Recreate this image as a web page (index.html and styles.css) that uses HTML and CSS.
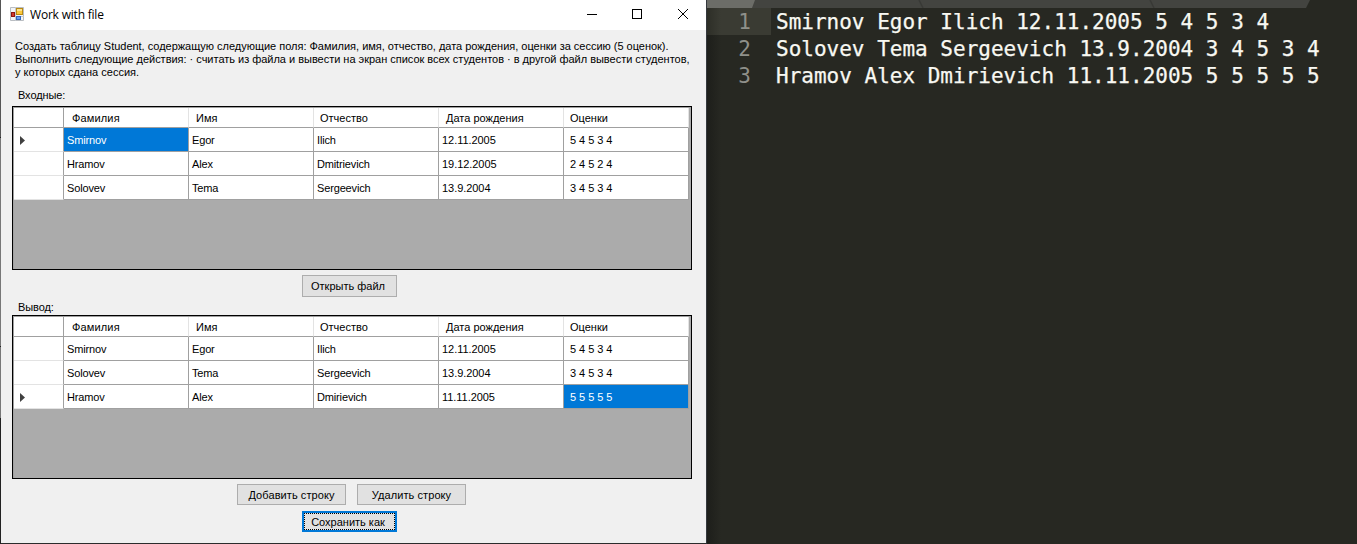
FILE: index.html
```
<!DOCTYPE html>
<html lang="ru">
<head>
<meta charset="utf-8">
<title>Work with file</title>
<link rel="stylesheet" href="styles.css">
</head>
<body>
<main class="desktop">
  <div class="backdrop"></div>
  <section class="window">
    <header class="titlebar">
      <svg class="app-icon" width="14" height="14" viewBox="0 0 14 14">
        <path d="M.5 .5h13v13H.5z" fill="#f3f5f8" stroke="#b9bdc2"/>
        <path d="M5.500 0v14M0 9.500h14" stroke="#c5c9ce"/>
        <rect x="6.500" y="1.500" width="6" height="6" fill="#fbc83c" stroke="#b98a13"/>
        <path d="M7 2h5v2H7z" fill="#fde391"/>
        <rect x="1.500" y="5.500" width="3" height="4" fill="#d0392b" stroke="#8e1711"/>
        <rect x="6.500" y="9.500" width="4" height="3" fill="#6b9ff0" stroke="#3568bd"/>
      </svg>
      <h1 class="title">Work with file</h1>
      <svg class="controls" width="104" height="12" viewBox="0 0 104 12" fill="none" stroke="#000" shape-rendering="crispEdges">
        <path d="M0 6.500h10M45.500 1.500h9v9h-9z"/>
        <path d="M91 1l10 10M101 1L91 11" shape-rendering="auto"/>
      </svg>
    </header>
    <div class="form">
      <p class="task"><span class="fit">Создать таблицу Student, содержащую следующие поля: Фамилия, имя, отчество, дата рождения, оценки за сессию (5 оценок).</span><br><span class="fit">Выполнить следующие действия: · считать из файла и вывести на экран список всех студентов · в другой файл вывести студентов,</span><br><span>у которых сдана сессия.</span></p>
      <h2 class="label label-in">Входные:</h2>
      <div class="grid">
        <div class="row head"><i></i><b class="surname">Фамилия</b><b>Имя</b><b class="patronymic">Отчество</b><b>Дата рождения</b><b class="patronymic">Оценки</b></div>
        <div class="row"><i><svg width="5" height="9" viewBox="0 0 5 9"><path d="M0 0l5 4.500L0 9z" fill="#404040"/></svg></i><span class="selected">Smirnov</span><span>Egor</span><span>Ilich</span><span class="date">12.11.2005</span><span class="marks">5 4 5 3 4</span></div>
        <div class="row"><i></i><span>Hramov</span><span>Alex</span><span>Dmitrievich</span><span class="date">19.12.2005</span><span class="marks">2 4 5 2 4</span></div>
        <div class="row"><i></i><span>Solovev</span><span>Tema</span><span>Sergeevich</span><span class="date">13.9.2004</span><span class="marks">3 4 5 3 4</span></div>
      </div>
      <div class="actions open"><button class="btn narrow">Открыть файл</button></div>
      <h2 class="label label-out">Вывод:</h2>
      <div class="grid">
        <div class="row head"><i></i><b class="surname">Фамилия</b><b>Имя</b><b class="patronymic">Отчество</b><b>Дата рождения</b><b class="patronymic">Оценки</b></div>
        <div class="row"><i></i><span>Smirnov</span><span>Egor</span><span>Ilich</span><span class="date">12.11.2005</span><span class="marks">5 4 5 3 4</span></div>
        <div class="row"><i></i><span>Solovev</span><span>Tema</span><span>Sergeevich</span><span class="date">13.9.2004</span><span class="marks">3 4 5 3 4</span></div>
        <div class="row"><i><svg width="5" height="9" viewBox="0 0 5 9"><path d="M0 0l5 4.500L0 9z" fill="#404040"/></svg></i><span>Hramov</span><span>Alex</span><span>Dmirievich</span><span class="date">11.11.2005</span><span class="marks selected">5 5 5 5 5</span></div>
      </div>
      <div class="actions edit"><button class="btn">Добавить строку</button><button class="btn">Удалить строку</button></div>
      <div class="actions save"><button class="btn narrow focused"><span>Сохранить как</span></button></div>
    </div>
  </section>
  <section class="editor">
    <svg class="tabs" width="650" height="8" viewBox="0 0 650 8">
      <path d="M0 0h603l-4 8H0z" fill="#434440"/>
      <path d="M0 0h48l-3 8H0z" fill="#6c6d68"/>
      <path d="M212 0l4 8M443 0l4 8" stroke="#393a36" stroke-width="1.500"/>
    </svg>
    <div class="line current"><span class="num">1</span><code>Smirnov Egor Ilich 12.11.2005 5 4 5 3 4</code></div>
    <div class="line"><span class="num">2</span><code>Solovev Tema Sergeevich 13.9.2004 3 4 5 3 4</code></div>
    <div class="line"><span class="num">3</span><code>Hramov Alex Dmirievich 11.11.2005 5 5 5 5 5</code></div>
  </section>
</main>
</body>
</html>
```
FILE: styles.css
```
* { box-sizing: border-box; }
body { margin: 0; font-family: "Liberation Sans", Arial, sans-serif; font-size: 11px; color: #000; }
.desktop { display: flex; width: 1357px; height: 544px; overflow: hidden; background: #272822; }
.backdrop { width: 1px; background: linear-gradient(#555 0 137px, #222 137px 138px, #777 138px 346px, #222 346px 347px, #777 347px 418px, #222 418px); }
.window { width: 706px; height: 544px; background: #f0f0f0; border-right: 1px solid #34383d; border-bottom: 1px solid #2b2c2c; }
.titlebar { display: flex; align-items: center; height: 30px; background: #fff; padding-left: 9px; }
.app-icon { margin-top: -2px; }
.title { margin: -2px 0 0 6px; font: 12px "Open Sans", sans-serif; letter-spacing: -0.2px; }
.controls { margin-left: auto; margin-right: 15px; margin-top: -2px; }
.form { padding: 10px 14px 0 11px; }
.task { margin: 0; height: 39px; padding-left: 3px; line-height: 13px; white-space: nowrap; }
.fit { letter-spacing: -0.018px; }
.label { margin: 0; padding-left: 6px; font-size: 11px; font-weight: 400; line-height: 13px; letter-spacing: -0.1px; }
.label-in { padding-top: 10px; height: 27px; }
.label-out { padding-top: 4px; height: 18px; }
.grid { width: 680px; height: 164px; border: 1px solid #000; padding: 1px 0 0 1px; background: #ababab; box-shadow: inset 1px 1px #a0a0a0; }
.row { display: grid; grid-template-columns: 50px repeat(5, 125px); height: 24px; width: 675px; }
.row > * { display: flex; align-items: center; background: #fff; border-right: 1px solid #a0a0a0; border-bottom: 1px solid #a0a0a0; white-space: nowrap; }
.row > i { border-bottom-color: #e3e3e3; padding: 1px 0 0 6px; }
.row > span { padding-left: 3px; letter-spacing: -0.15px; }
.row > .date { letter-spacing: -0.05px; }
.row > .marks { padding-left: 6px; letter-spacing: -0.05px; }
.row > .selected { background: #0078d7; color: #fff; }
.head { height: 20px; }
.head > b { font-weight: 400; padding-left: 7px; border-right-color: #e3e3e3; }
.head > .surname { padding-left: 8px; letter-spacing: 0.15px; }
.head > .patronymic { padding-left: 6px; }
.head > i { border-bottom-color: #a0a0a0; }
.actions { display: flex; justify-content: center; margin-left: -5px; gap: 11px; }
.open { padding-top: 5px; height: 27px; }
.edit { padding-top: 5px; margin-left: -1px; }
.save { padding-top: 6px; }
.btn { width: 109px; height: 21px; padding: 0; border: 1px solid #adadad; background: #e1e1e1; font: inherit; color: #000; white-space: nowrap; }
.edit .btn { letter-spacing: 0.08px; }
.narrow { width: 95px; padding-right: 3px; }
.open .btn { height: 22px; }
.focused { border: 2px solid #0078d7; padding: 0; }
.focused span { display: flex; align-items: center; justify-content: center; width: 100%; height: 100%; padding-right: 3px; border: 1px dotted #000; }
.editor { width: 650px; background: linear-gradient(90deg, #1d1e1a, #272822 14px); }
.tabs { display: block; }
.line { display: flex; height: 27px; align-items: center; font: 21px/27px "DejaVu Sans Mono", monospace; color: #f8f8f2; }
.num { width: 64px; height: 27px; padding: 1px 20px 0 0; text-align: right; color: #8f908a; }
.current .num { background: linear-gradient(90deg, #2d2e27, #3a3b33 14px); }
.line code { font: inherit; padding: 2px 0 0 5px; white-space: pre; -webkit-text-stroke: 0.25px #f8f8f2; }
```
